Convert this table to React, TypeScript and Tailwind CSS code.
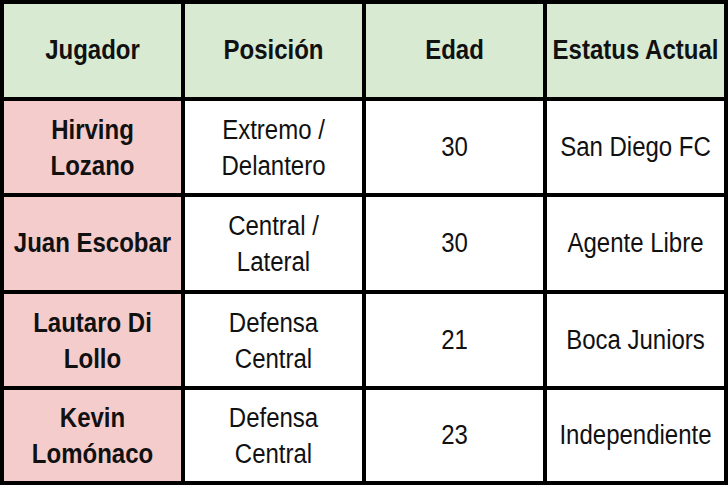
import React from "react";

type Cell = { lines: string[]; bold?: boolean; bg: string };

const header = ["Jugador", "Posición", "Edad", "Estatus Actual"];

const rows: string[][][] = [
  [["Hirving", "Lozano"], ["Extremo /", "Delantero"], ["30"], ["San Diego FC"]],
  [["Juan Escobar"], ["Central /", "Lateral"], ["30"], ["Agente Libre"]],
  [["Lautaro Di", "Lollo"], ["Defensa", "Central"], ["21"], ["Boca Juniors"]],
  [["Kevin", "Lomónaco"], ["Defensa", "Central"], ["23"], ["Independiente"]],
];

function CellBox({ lines, bold, bg }: Cell) {
  return (
    <div className={`flex items-center justify-center ${bg}`}>
      <div
        className={`scale-y-[1.15] text-center text-[24px] leading-[30.5px] text-[#111111] whitespace-nowrap ${
          bold ? "font-bold" : "font-normal"
        }`}
      >
        {lines.map((l, i) => (
          <div key={i}>{l}</div>
        ))}
      </div>
    </div>
  );
}

export default function App() {
  return (
    <div
      className="w-[728px] h-[488px] bg-white"
      style={{ fontFamily: '"Liberation Sans", Arial, sans-serif' }}
    >
      <div className="grid grid-cols-4 grid-rows-[93px_92px_93px_92px_91px] gap-[4px] bg-black p-[4px]">
        {header.map((h) => (
          <CellBox key={h} lines={[h]} bold bg="bg-[#d9ead3]" />
        ))}
        {rows.map((r, ri) =>
          r.map((c, ci) => (
            <CellBox
              key={`${ri}-${ci}`}
              lines={c}
              bold={ci === 0}
              bg={ci === 0 ? "bg-[#f4cccc]" : "bg-white"}
            />
          ))
        )}
      </div>
    </div>
  );
}
